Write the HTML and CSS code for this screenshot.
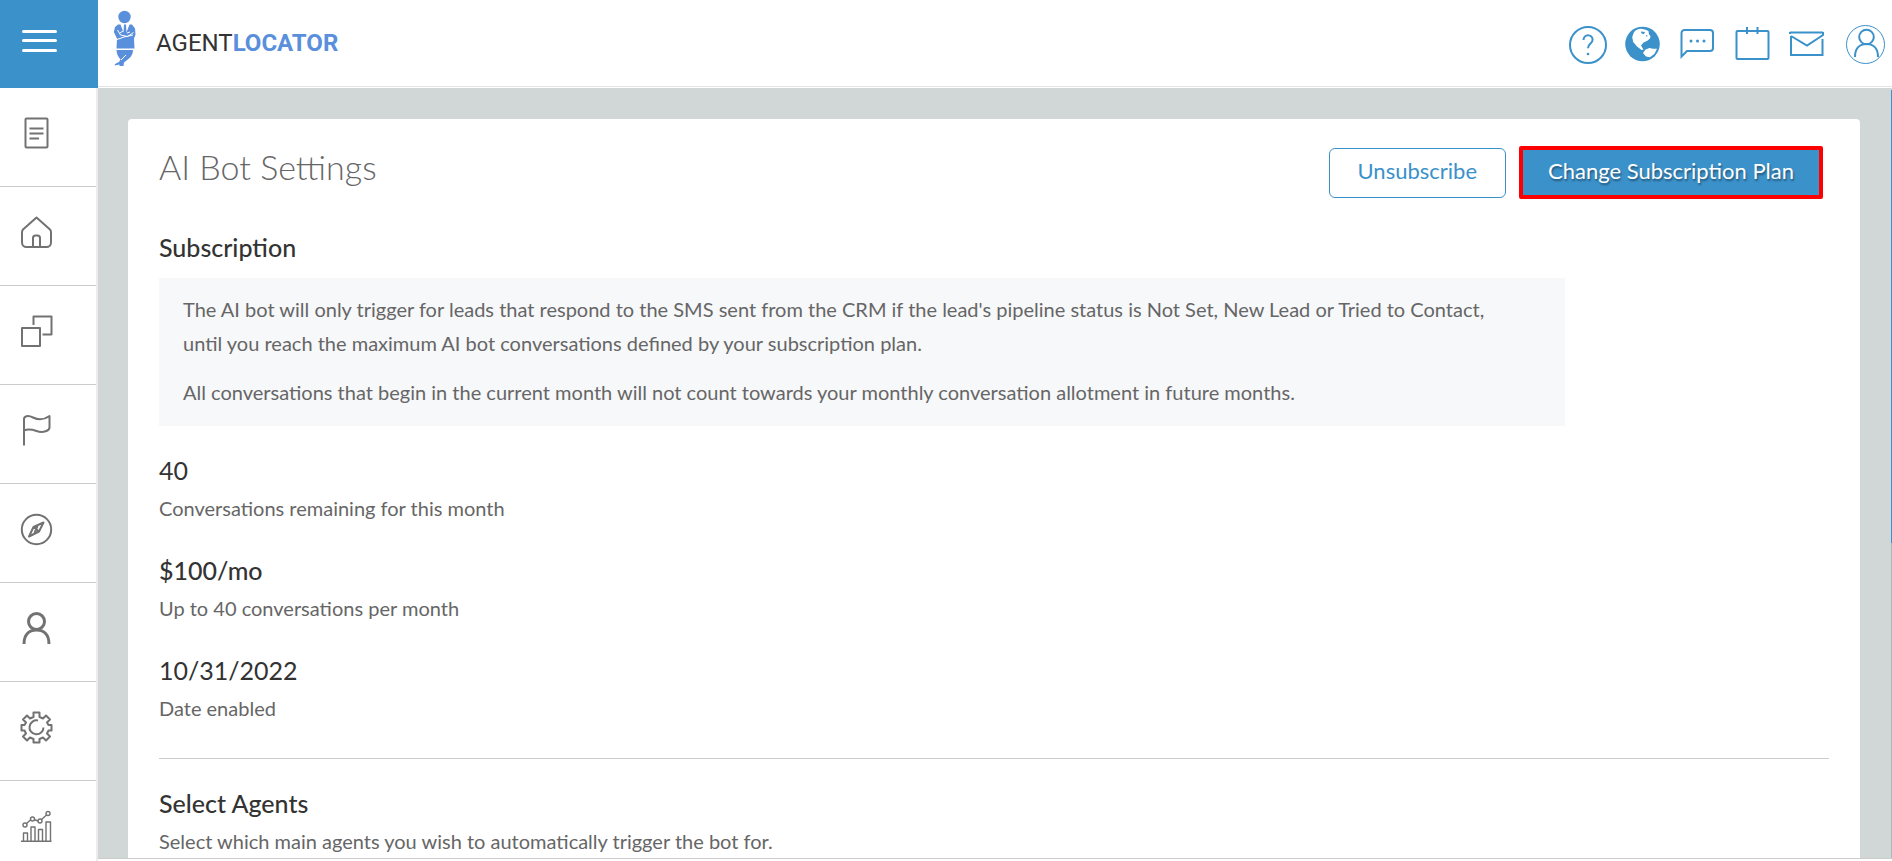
FILE: index.html
```
<!DOCTYPE html>
<html lang="en">
<head>
  <meta charset="UTF-8">
  <meta name="viewport" content="width=device-width, initial-scale=1.0">
  <title>AI Bot Settings - AgentLocator</title>
  <link rel="stylesheet" href="styles.css">
</head>
<body>

<header class="topbar">
  <button class="menu-btn" type="button" aria-label="Menu">
    <svg width="36" height="24" viewBox="0 0 36 24"><path d="M2.500 2.500h32M2.500 11.500h32M2.500 21.500h32"/></svg>
  </button>
  <a class="brand" href="#">
    <svg class="brand-man" width="24" height="58" viewBox="0 0 24 58">
      <circle cx="11.500" cy="7" r="6.200"/>
      <path d="M5 14.500h2.500l3 8 .5-8h2l.5 8 3-8H19l3 4 .5 6-1.500 4 .5 10h-18L4 28.500.8 22 2 17z"/>
      <path d="M3.500 40H20c0 5-3 8-6.500 10.500l-2.500 2-.5 3.500H6.500v-1.500l-4.700 1c-.6-1.500 1-2 4.200-3.500l1.500-2.500C5 46.500 3.500 43.500 3.500 40z"/>
      <path class="cut" d="M4.500 20l3 5 7 1.500 6-4M4 29.500l7-2.500 9-2M7 23l3-2M14 23l3-1M8 50l5-5"/>
    </svg>
    <span class="brand-name">AGENT<b>LOCATOR</b></span>
  </a>
  <nav class="tools">
    <a href="#" aria-label="Help"><svg viewBox="0 0 40 40"><circle cx="21" cy="21" r="18"/><path d="M16.500 16c0-2.800 2-4.700 4.500-4.700s4.600 1.800 4.600 4.500c0 4-4.600 3.700-4.600 8.500"/><circle class="fill" cx="21" cy="30" r="1.300"/></svg></a>
    <a href="#" aria-label="Website"><svg viewBox="0 0 40 40"><circle class="fill" cx="20.500" cy="20" r="17.300"/><path class="land" d="M12 8c2-2 4.500-3.200 7-3.200l4 .7 3.500 1.500.5 3.500 1.500 1.500-.5 2.500-3 2.500-3.500 1.500-2.500 3 2.500 4-2 .5-4.500-3.500-3.800-4.500-1-5z"/><path class="land" d="M21 29l2.500-3.500 4-1.500 3.500.7h4l-2.500 5-4.500 3.500-4-.7z"/><path class="fill" d="M19 7.500l4 .5-1 2-2.500-.5zM23.500 11l2 .5-.5 1.500z"/></svg></a>
    <a href="#" aria-label="Messages"><svg viewBox="0 0 40 40"><path d="M4.500 32.500V9a3 3 0 0 1 3-3H33a3 3 0 0 1 3 3v15a3 3 0 0 1-3 3H10z"/><circle class="fill" cx="14" cy="17" r="1.500"/><circle class="fill" cx="20.500" cy="17" r="1.500"/><circle class="fill" cx="27" cy="17" r="1.500"/></svg></a>
    <a href="#" aria-label="Calendar"><svg viewBox="0 0 40 40"><rect x="4.500" y="7" width="32" height="28" rx="1"/><path d="M15 3v7M25.500 3v7"/></svg></a>
    <a href="#" aria-label="Mail"><svg viewBox="0 0 40 40"><path d="M3 8.500h33M4 12v19h31.500V15M3 8v2M4 12l16 9.500L36 11V8"/></svg></a>
    <a href="#" aria-label="Profile"><svg viewBox="0 0 40 40"><circle class="thin" cx="19.500" cy="20.500" r="19"/><circle cx="20.500" cy="13" r="7.300"/><path d="M9 33c0-8 4-13 11.500-13S32 25 32 33"/></svg></a>
  </nav>
</header>

<div class="layout">
  <nav class="sidebar">
    <a href="#" aria-label="Listings"><svg viewBox="0 0 32 32"><rect x="5.500" y="1.500" width="22" height="29" rx="1"/><path d="M9.500 11.500h14M9.500 16.500h14M9.500 21.500h9.500"/></svg></a>
    <a href="#" aria-label="Home"><svg viewBox="0 0 32 32"><path d="M16.500 1.500L30 13.500c.8.800 1 1.500 1 3v10a4.500 4.500 0 0 1-4.500 4.500h-20A4.500 4.500 0 0 1 2 26.500v-10c0-1.500.2-2.200 1-3zM13 31v-9a2.500 2.500 0 0 1 2.500-2.500h2a2.500 2.500 0 0 1 2.500 2.500v9"/></svg></a>
    <a href="#" aria-label="Pages"><svg viewBox="0 0 32 32"><path d="M2 13h18v18H2zM13.500 10V1.500h18v18H22.500"/></svg></a>
    <a href="#" aria-label="Campaigns"><svg viewBox="0 0 32 32"><path d="M4 31.500V5c0-3 4-4 9-1.500 6 3 11 2.500 16.500-1.500v11.500c0 3-6 6-13 3.500-6-2-9-2-12.500-.5"/></svg></a>
    <a href="#" aria-label="Explore"><svg viewBox="0 0 32 32"><circle cx="16.500" cy="16.500" r="14.700"/><path d="M23.500 9.500l-4.500 9-10 5 4.500-9.500zM13.500 14l5.500 4.500M17.500 13l-3 7"/></svg></a>
    <a href="#" aria-label="Contacts"><svg class="bold" viewBox="0 0 32 32"><circle cx="16.500" cy="9.500" r="8"/><path d="M4 32C4 23 9 18 16.500 18S29 23 29 32"/></svg></a>
    <a href="#" aria-label="Settings"><svg viewBox="0 0 32 32"><path d="M13.500 1.500h6V6l3.500 1.500 3-3 4 4-3 3L28.500 14h3v5.500h-3L27 22.500l3 3-4 4-3-3L19.500 28v3.500h-6V28L10 26.500l-3 3-4-4 3-3L4.500 19.500h-3V14h3L6 11.500l-3-3 4-4 3 3L13.500 6z"/><path d="M18 9.500a7 7 0 1 0 5.500 7"/></svg></a>
    <a href="#" aria-label="Reports"><svg class="light" viewBox="0 0 32 32"><path d="M1 31.300h30.500M3.500 31v-8h4v8M11 31V17h4v14M18.500 31V19.500h4V31M26 31V12h4.500v19M6.500 13.500l4.500-4M14 9.500l4 1.500M21.500 9.500l5-4.500"/><circle cx="5" cy="15" r="2"/><circle cx="12.500" cy="9" r="2"/><circle cx="20" cy="11" r="2"/><circle cx="28" cy="3.500" r="2"/></svg></a>
  </nav>

  <main class="content">
    <section class="card">
      <div class="card-head">
        <h1>AI Bot Settings</h1>
        <div class="actions">
          <button class="btn" type="button">Unsubscribe</button>
          <button class="btn btn-primary" type="button">Change Subscription Plan</button>
        </div>
      </div>

      <h2>Subscription</h2>
      <div class="notice">
        <p>The AI bot will only trigger for leads that respond to the SMS sent from the CRM if the lead's pipeline status is Not Set, New Lead or Tried to Contact, until you reach the maximum AI bot conversations defined by your subscription plan.</p>
        <p>All conversations that begin in the current month will not count towards your monthly conversation allotment in future months.</p>
      </div>

      <dl class="stats">
        <div>
          <dt>40</dt>
          <dd>Conversations remaining for this month</dd>
        </div>
        <div>
          <dt class="strong">$100/mo</dt>
          <dd>Up to 40 conversations per month</dd>
        </div>
        <div>
          <dt>10/31/2022</dt>
          <dd>Date enabled</dd>
        </div>
      </dl>

      <hr>

      <h2>Select Agents</h2>
      <p class="hint">Select which main agents you wish to automatically trigger the bot for.</p>
    </section>
    <div class="scrollbar"></div>
  </main>
</div>

</body>
</html>
```
FILE: styles.css
```
* {
  box-sizing: border-box;
}
body {
  margin: 0;
  height: 100vh;
  display: flex;
  flex-direction: column;
  overflow: hidden;
  font-family: Lato, sans-serif;
  font-size: 20px;
  line-height: 34px;
  color: #666;
  background: #fff;
}
h1, h2, p, dl, dd {
  margin: 0;
}

/* top bar */
.topbar {
  display: flex;
  align-items: center;
  flex: none;
  height: 88px;
  box-shadow: inset 0 -1px #fff, inset 0 -2px #e3e5e5;
}
.menu-btn {
  width: 98px;
  height: 88px;
  padding: 0 0 6px 21px;
  border: 0;
  background: #3b91ca;
  text-align: left;
  cursor: pointer;
}
.menu-btn svg {
  display: block;
  fill: none;
  stroke: #fff;
  stroke-width: 3;
  stroke-linecap: round;
}
.brand {
  display: flex;
  align-items: center;
  gap: 19px;
  padding: 0 0 10px 15px;
  text-decoration: none;
}
.brand-man {
  fill: #5a8fdc;
}
.brand-man .cut {
  fill: none;
  stroke: #fff;
  stroke-width: 1;
}
.brand-name {
  padding-top: 8px;
  font-family: Roboto, sans-serif;
  font-size: 24px;
  color: #333;
}
.brand-name b {
  color: #5a8fdc;
}
.tools {
  display: flex;
  gap: 15px;
  margin-left: auto;
  padding-right: 6px;
}
.tools a:last-child {
  margin-left: 4px;
}
.tools svg {
  display: block;
  width: 40px;
  height: 40px;
  fill: none;
  stroke: #3b91ca;
  stroke-width: 2;
}
.tools .fill {
  fill: #3b91ca;
  stroke: none;
}
.tools .land {
  fill: #fff;
  stroke: none;
}
.tools .thin {
  stroke-width: 1;
}

/* left menu + page */
.layout {
  display: flex;
  flex: 1;
  min-height: 0;
}
.sidebar {
  flex: none;
  width: 98px;
  overflow: hidden;
  border-right: 2px solid #ececec;
}
.sidebar a {
  display: block;
  height: 99px;
  padding: 28px 0 0 20px;
  border-bottom: 1px solid #ccc;
}
.sidebar svg {
  display: block;
  width: 32px;
  height: 34px;
  overflow: visible;
  fill: none;
  stroke: #727272;
  stroke-width: 2;
  stroke-linejoin: round;
}
.sidebar .bold {
  stroke-width: 3;
}
.sidebar .light {
  stroke-width: 1.4;
}
.content {
  position: relative;
  flex: 1;
  margin-bottom: 2px;
  padding: 31px 32px 0 30px;
  overflow: hidden;
  background: #d1d7d7;
  border-bottom: 1px solid #ccc;
}
.scrollbar {
  position: absolute;
  top: 2px;
  right: 0;
  bottom: 0;
  width: 1px;
  background: linear-gradient(#3b91ca 59%, #b0b5b5 59%);
}

/* card */
.card {
  min-height: 100%;
  padding: 26px 31px 40px;
  background: #fff;
  border-radius: 4px;
}
.card-head {
  display: flex;
  justify-content: space-between;
  height: 83px;
}
h1 {
  font-size: 34px;
  font-weight: 300;
  line-height: 44px;
}
h2 {
  font-size: 25px;
  font-weight: 500;
  line-height: 38px;
  color: #333;
}
.actions {
  display: flex;
  align-items: center;
  gap: 13px;
  height: 55px;
  padding-right: 6px;
}
.btn {
  height: 50px;
  padding: 0 28px 4px;
  border: 1px solid #3b91ca;
  border-radius: 6px;
  background: #fff;
  color: #3b91ca;
  font-family: inherit;
  font-size: 22px;
  cursor: pointer;
}
.btn-primary {
  height: 53px;
  padding: 0 25px 4px;
  border: 4px solid #f00;
  border-radius: 2px;
  background: #3b91ca;
  color: #fff;
  text-shadow: 1px 2px 2px rgba(0, 0, 0, 0.4);
}
.notice {
  max-width: 1406px;
  margin-top: 12px;
  padding: 14px 40px 17px 24px;
  background: #f7f8fa;
}
.notice p + p {
  margin-top: 15px;
}
.stats {
  padding: 25px 0 31px;
}
.stats div + div {
  margin-top: 24px;
}
dt {
  font-size: 25px;
  line-height: 38px;
  color: #333;
}
dt.strong {
  font-weight: 500;
}
.stats dd {
  line-height: 38px;
}
hr {
  height: 1px;
  margin: 0 0 25px;
  border: 0;
  background: #ccc;
}
.hint {
  line-height: 38px;
}
```
